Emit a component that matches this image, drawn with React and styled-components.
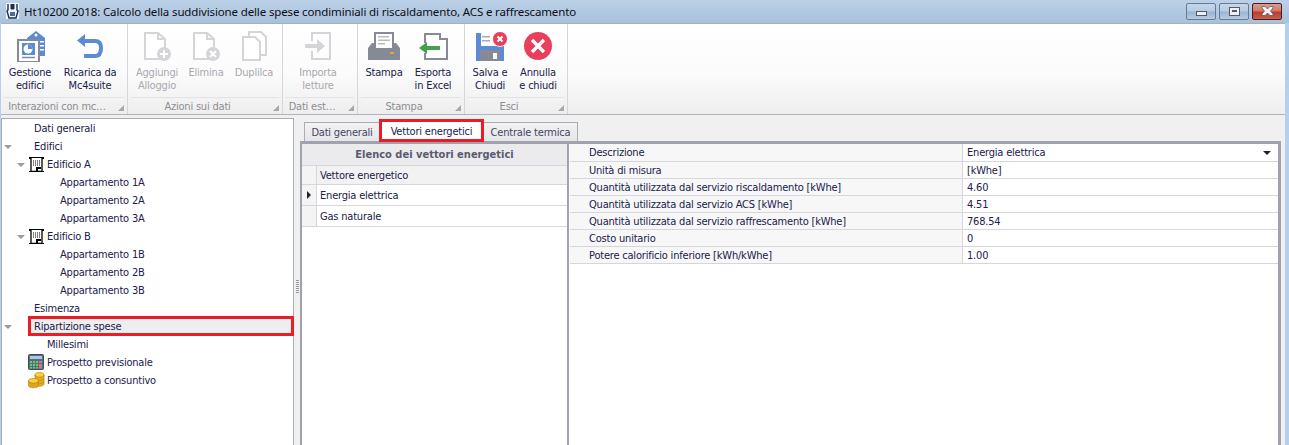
import React from 'react';
import styled, { createGlobalStyle } from 'styled-components';

const Global = createGlobalStyle`
  html, body { margin: 0; padding: 0; height: 445px; overflow: hidden; background: #b5d0ee; }
  * { box-sizing: border-box; }
`;

const UI_FONT = `"DejaVu Sans Condensed", "DejaVu Sans", sans-serif`;

const Window = styled.div`
  width: 1289px;
  height: 445px;
  display: flex;
  flex-direction: column;
  overflow: hidden;
  font-family: ${UI_FONT};
  font-size: 11px;
  letter-spacing: -0.2px;
  color: #20204a;
  background: #b5d0ee;
`;

const TitleBar = styled.div`
  height: 23px;
  flex: none;
  display: flex;
  align-items: center;
  padding: 0 7px 1px 6px;
  background: linear-gradient(to bottom, #bcd1e7, #a8c1dc);
`;

const TitleText = styled.div`
  flex: 1;
  margin-left: 5px;
  font-family: "Noto Sans", sans-serif;
  font-size: 11.5px;
  letter-spacing: -0.14px;
  color: #0c0c14;
  white-space: nowrap;
`;

const WinButton = styled.div`
  width: 30px;
  height: 17px;
  margin-left: 3px;
  display: flex;
  align-items: center;
  justify-content: center;
  border: 1px solid ${p => (p.$close ? '#4a1a28' : '#6a7a90')};
  border-radius: 2px;
  background: ${p =>
    p.$close
      ? 'linear-gradient(to bottom, #dc9a8a 0%, #d07a66 48%, #b83e28 52%, #c8604a 100%)'
      : 'linear-gradient(to bottom, #c5d7ea 0%, #b5cbe2 48%, #9ab4d0 52%, #b5cce4 100%)'};
`;

const Body = styled.div`
  flex: 1;
  min-height: 0;
  margin: 0 4px 0 1px;
  display: flex;
  flex-direction: column;
  background: #f0f0f0;
`;

const Ribbon = styled.div`
  height: 92px;
  flex: none;
  display: flex;
  border-top: 1px solid #a9b0ba;
  border-bottom: 1px solid #b0b4bc;
  background: linear-gradient(to bottom, #ffffff 0%, #fbfbfc 55%, #eeeeef 100%);
`;

const Group = styled.div`
  position: relative;
  width: ${p => p.$width}px;
  flex: none;
  display: flex;
  flex-direction: column;
  border-right: 1px solid #d6d6da;
`;

const GroupButtons = styled.div`
  flex: 1;
  display: flex;
  padding-left: ${p => p.$pad}px;
`;

const GroupLabel = styled.div`
  height: 17px;
  margin: 0 3px;
  padding-right: ${p => p.$pr ?? 15}px;
  border-top: 1px solid #e4e4e6;
  text-align: center;
  line-height: 17px;
  color: #8d8d92;
  white-space: nowrap;
`;

const Launcher = styled.div`
  position: absolute;
  right: 3px;
  bottom: 3px;
  width: 0;
  height: 0;
  border-left: 6px solid transparent;
  border-bottom: 6px solid #a8a8ac;
`;

const ToolButton = styled.div`
  width: ${p => p.$width}px;
  flex: none;
  display: flex;
  flex-direction: column;
  align-items: center;
  padding-top: 4px;
  color: ${p => (p.$disabled ? '#a9a9ae' : '#20204a')};
`;

const ToolIcon = styled.div`
  height: 36px;
  display: flex;
  align-items: center;
  justify-content: center;
`;

const ToolLabel = styled.div`
  margin-top: 2px;
  text-align: center;
  line-height: 13px;
  white-space: pre-line;
`;

const Content = styled.div`
  flex: 1;
  min-height: 0;
  display: flex;
  padding-top: 3px;
`;

const TreePanel = styled.div`
  width: 293px;
  flex: none;
  background: #fff;
  border: 1px solid #a9adb5;
  border-bottom: none;
`;

const TreeRow = styled.div`
  position: relative;
  height: 18px;
  display: flex;
  align-items: center;
  padding-left: ${p => 2 + p.$level * 13}px;
  margin-left: ${p => (p.$marked ? 27 : 0)}px;
  ${p => p.$marked && `
    padding-left: 5px;
    background: #eceef0;
    outline: 3px solid #ed1c24;
    outline-offset: -2px;
  `}
`;

const Expander = styled.div`
  width: 13px;
  flex: none;
  display: flex;
`;

const ExpanderGlyph = styled.div`
  width: 0;
  height: 0;
  margin: 1px 0 0 0;
  border-left: 4px solid transparent;
  border-right: 4px solid transparent;
  border-top: 4px solid #9a9a9e;
`;

const MarkedExpander = styled(ExpanderGlyph)`
  position: absolute;
  left: -25px;
  top: 7px;
`;

const TreeIcon = styled.div`
  width: 17px;
  flex: none;
  display: flex;
  align-items: center;
`;

const Splitter = styled.div`
  width: 6px;
  flex: none;
  display: flex;
  align-items: center;
  justify-content: center;
  padding-top: 10px;
`;

const Grip = styled.div`
  width: 3px;
  height: 14px;
  background: repeating-linear-gradient(to bottom, #9a9a9e 0 1px, transparent 1px 2px);
`;

const Main = styled.div`
  flex: 1;
  min-width: 0;
  display: flex;
  flex-direction: column;
  margin-right: 4px;
`;

const TabStrip = styled.div`
  height: 23px;
  flex: none;
  display: flex;
  align-items: flex-end;
  padding-left: 4px;
`;

const Tab = styled.div`
  position: relative;
  width: ${p => p.$width}px;
  height: ${p => (p.$active ? 21 : 19)}px;
  display: flex;
  align-items: center;
  justify-content: center;
  background: ${p => (p.$active ? '#fff' : 'linear-gradient(to bottom, #f2f2f4, #e6e6ea)')};
  border: 1px solid #a9adb5;
  border-bottom: none;
  ${p => p.$active && `
    outline: 3px solid #ed1c24;
    outline-offset: -2px;
    z-index: 1;
  `}
  color: ${p => (p.$active ? '#20204a' : '#45455f')};
`;

const TabPage = styled.div`
  flex: 1;
  min-height: 0;
  display: flex;
  background: #fff;
  border: 2px solid #a0a2ae;
  border-top-width: 3px;
  border-right-width: 3px;
  border-bottom: none;
`;

const ListPane = styled.div`
  width: 267px;
  flex: none;
  border-right: 2px solid #a0a2ae;
`;

const ListHeader = styled.div`
  height: 22px;
  display: flex;
  align-items: center;
  justify-content: center;
  font-weight: bold;
  letter-spacing: 0;
  color: #5a5a6e;
  background: #ebebed;
  border-bottom: 1px solid #d6d6dc;
`;

const ListRow = styled.div`
  height: ${p => (p.$head ? 19 : 21)}px;
  display: flex;
  border-bottom: 1px solid #d6d6dc;
  background: ${p => (p.$head ? '#f2f2f3' : '#fff')};
`;

const RowIndicator = styled.div`
  width: 15px;
  flex: none;
  display: flex;
  align-items: center;
  justify-content: center;
  background: #f4f4f5;
  border-right: 1px solid #d6d6dc;
`;

const IndicatorArrow = styled.div`
  width: 0;
  height: 0;
  border-top: 4px solid transparent;
  border-bottom: 4px solid transparent;
  border-left: 4px solid #20202e;
`;

const RowText = styled.div`
  flex: 1;
  display: flex;
  align-items: center;
  padding-left: 3px;
`;

const PropPane = styled.div`
  flex: 1;
  min-width: 0;
  margin-left: 1px;
`;

const PropRow = styled.div`
  height: ${p => (p.$first ? 18 : 17)}px;
  display: flex;
  border-bottom: 1px solid #d6d6dc;
`;

const PropLabel = styled.div`
  width: 393px;
  flex: none;
  padding-left: 19px;
  line-height: 18px;
  background: #f7f7f8;
  border-right: 1px solid #d6d6dc;
  white-space: nowrap;
`;

const PropValue = styled.div`
  flex: 1;
  display: flex;
  justify-content: space-between;
  padding: 0 7px 0 4px;
  line-height: 18px;
`;

const DropArrow = styled.div`
  width: 0;
  height: 0;
  margin-top: 7px;
  border-left: 4px solid transparent;
  border-right: 4px solid transparent;
  border-top: 4px solid #20202e;
`;

const GestioneIcon = () => (
  <svg width="30" height="32" viewBox="0 0 30 32" style={{ marginLeft: 4 }}>
    <path d="M10 8 L19 1 L28 8 V26 H10 Z" fill="#5b8bd0" />
    <circle cx="19" cy="5" r="1.5" fill="#fff" />
    <path d="M23 11h4v1.5h-4zM23 15h4v1.5h-4zM23 19h4v1.5h-4z" fill="#fff" />
    <rect x="1" y="10" width="21" height="22" fill="#fff" stroke="#868a96" strokeWidth="2" />
    <path d="M5 13h13v12H5z" fill="#5b8bd0" />
    <circle cx="11" cy="19" r="4.5" fill="#fff" />
    <path d="M11 19 V14.5 A4.5 4.5 0 0 1 15.5 19 Z" fill="#5b8bd0" />
    <path d="M5 27.5h13" stroke="#868a96" strokeWidth="1.5" />
  </svg>
);

const RicaricaIcon = () => (
  <svg width="28" height="26" viewBox="0 0 28 26">
    <path d="M9 1 L1 7.5 L9 14 V10 H19 Q23 10 23 15 Q23 21 19 21 H8 V25 H19 Q27 25 27 15 Q27 6 19 6 H9 Z" fill="#5b8bd0" />
  </svg>
);

const PageShape = () => (
  <path d="M2 2 H15 L22 8 V28 H2 Z M15 2 V8 H22" fill="#fff" stroke="#d4d5d9" strokeWidth="2" />
);

const AggiungiIcon = () => (
  <svg width="28" height="30" viewBox="0 0 28 30">
    <PageShape />
    <circle cx="21" cy="23" r="7" fill="#d4d5d9" />
    <path d="M21 19v8M17 23h8" stroke="#fff" strokeWidth="2" />
  </svg>
);

const EliminaIcon = () => (
  <svg width="28" height="30" viewBox="0 0 28 30">
    <PageShape />
    <circle cx="21" cy="23" r="7" fill="#d4d5d9" />
    <path d="M18 20l6 6M24 20l-6 6" stroke="#fff" strokeWidth="2" />
  </svg>
);

const DuplicaIcon = () => (
  <svg width="26" height="30" viewBox="0 0 26 30">
    <path d="M8 1 H20 L25 6 V24 H8 Z" fill="#fff" stroke="#d4d5d9" strokeWidth="2" />
    <path d="M2 6 H14 L19 11 V29 H2 Z" fill="#fff" stroke="#d4d5d9" strokeWidth="2" />
  </svg>
);

const ImportaIcon = () => (
  <svg width="28" height="30" viewBox="0 0 28 30">
    <path d="M8 10 V2 H26 V28 H8 V20" fill="none" stroke="#d4d5d9" strokeWidth="2" />
    <path d="M1 13 H13 V8 L21 15 L13 22 V17 H1 Z" fill="#d4d5d9" />
  </svg>
);

const StampaIcon = () => (
  <svg width="32" height="28" viewBox="0 0 32 28">
    <path d="M6 0 H26 V12 H6 Z" fill="#868a96" />
    <path d="M4 11 H28 L32 16 V28 H0 V16 Z" fill="#868a96" />
    <path d="M8 2h16v14H8z" fill="#fff" />
    <path d="M10 4h11v1.5H10zM10 7.5h12V9H10zM10 11h7v1.5h-7z" fill="#b8bac0" />
    <rect x="22" y="20" width="4" height="2" fill="#f0a030" />
  </svg>
);

const EsportaIcon = () => (
  <svg width="30" height="27" viewBox="0 0 30 27" style={{ marginLeft: 2 }}>
    <path d="M6 10 V1 H21 V6 H28 V26 H6 V20" fill="#fff" stroke="#868a96" strokeWidth="2" />
    <path d="M0 15 L8 9 V13 H21 V17 H8 V21 Z" fill="#3fa34d" />
  </svg>
);

const SalvaIcon = () => (
  <svg width="32" height="29" viewBox="0 0 32 29" style={{ marginLeft: 3 }}>
    <path d="M0 1 H24 L28 5 V29 H0 Z" fill="#5b8bd0" />
    <path d="M5 1 H22 V14 H5 Z" fill="#fff" />
    <path d="M6 4h8v1.5H6zM6 8h8v1.5H6z" fill="#a9abb0" />
    <path d="M4 18 H24 V29 H4 Z" fill="#868a96" />
    <rect x="17" y="21" width="4" height="6" fill="#fff" />
    <circle cx="24" cy="7" r="7.5" fill="#e8405a" stroke="#fff" strokeWidth="0.8" />
    <path d="M21.5 4.5l5 5M26.5 4.5l-5 5" stroke="#fff" strokeWidth="2" />
  </svg>
);

const AnnullaIcon = () => (
  <svg width="28" height="28" viewBox="0 0 28 28">
    <circle cx="14" cy="14" r="14" fill="#e8405a" />
    <path d="M8 8l12 12M20 8L8 20" stroke="#fff" strokeWidth="3.4" />
  </svg>
);

const BuildingIcon = () => (
  <svg width="15" height="15" viewBox="0 0 15 15" style={{ marginLeft: -1 }}>
    <rect x="0" y="0" width="15" height="2" fill="#000" />
    <path d="M2 1v13.5h11V1" fill="#fff" stroke="#000" strokeWidth="1.3" />
    <rect x="0" y="14" width="15" height="1" fill="#000" />
    <path d="M4 4h1M6 4h1M8 4h1M10 4h1M4 6h1M6 6h1M8 6h1M10 6h1M4 8h1M6 8h1M8 8h1M10 8h1" stroke="#000" />
    <path d="M7 10h5v2H9v3H7z" fill="#000" />
  </svg>
);

const CalculatorIcon = () => (
  <svg width="16" height="16" viewBox="0 0 16 16" style={{ marginLeft: -2 }}>
    <rect x="0.5" y="0.5" width="15" height="15" rx="1" fill="#5a6a80" stroke="#3e4a5c" />
    <rect x="2" y="2" width="12" height="3" fill="#a9c8e8" />
    <path d="M2 7h2v2H2zM5 7h2v2H5zM8 7h2v2H8zM2 10h2v2H2zM5 10h2v2H5zM8 10h2v2H8zM2 13h2v1.5H2zM5 13h2v1.5H5zM8 13h2v1.5H8z" fill="#5fd068" />
    <path d="M11 7h3v2h-3zM11 10h3v4.5h-3z" fill="#c87a7a" />
  </svg>
);

const CoinsIcon = () => (
  <svg width="17" height="17" viewBox="0 0 17 17" style={{ marginLeft: -2 }}>
    <ellipse cx="11.5" cy="3" rx="4.5" ry="2.5" fill="#f8cf40" stroke="#b8860b" strokeWidth="0.7" />
    <path d="M7 3v9c0 3 9 3 9 0V3c0 3-9 3-9 0z" fill="#e8ae20" stroke="#b8860b" strokeWidth="0.7" />
    <path d="M7 6.5c0 2.5 9 2.5 9 0M7 9.5c0 2.5 9 2.5 9 0" fill="none" stroke="#b8860b" strokeWidth="0.7" />
    <ellipse cx="5.5" cy="9" rx="5" ry="2.5" fill="#f8cf40" stroke="#b8860b" strokeWidth="0.7" />
    <path d="M0.5 9v4.5c0 3 10 3 10 0V9c0 3-10 3-10 0z" fill="#e2a41c" stroke="#b8860b" strokeWidth="0.7" />
  </svg>
);

const AppIcon = () => (
  <svg width="13" height="16" viewBox="0 0 13 16">
    <rect width="13" height="16" fill="#f4f6fa" />
    <path d="M2 1v6l-1 1 2 7h7l2-7-1-1V1" fill="none" stroke="#1c2c50" strokeWidth="1.4" />
    <path d="M5 1v5h3V1" fill="#1c2c50" stroke="#1c2c50" />
    <path d="M4 9h5v4H4z" fill="#4a6aa0" />
  </svg>
);

const MinGlyph = () => (
  <svg width="11" height="5" viewBox="0 0 11 5" style={{ marginTop: 5 }}>
    <rect x="0.5" y="0.5" width="10" height="4" fill="#f0f0f4" stroke="#50586a" />
  </svg>
);

const MaxGlyph = () => (
  <svg width="11" height="9" viewBox="0 0 11 9">
    <rect x="0.5" y="0.5" width="10" height="8" fill="#f0f0f4" stroke="#50586a" />
    <rect x="3" y="3" width="5" height="2" fill="#50586a" />
  </svg>
);

const CloseGlyph = () => (
  <svg width="13" height="10" viewBox="0 0 13 10">
    <path d="M1 0.5h3l2.5 2.5L9 0.5h3v1.5L9.5 5 12 8v1.5H9L6.5 7 4 9.5H1V8l2.5-3L1 2z" fill="#f2f2f4" stroke="#50505a" strokeWidth="0.7" />
  </svg>
);

const ribbonGroups = [
  {
    label: 'Interazioni con mc…', width: 127, pad: 0, pr: 14,
    buttons: [
      { label: 'Gestione\nedifici', width: 58, icon: <GestioneIcon /> },
      { label: 'Ricarica da\nMc4suite', width: 62, icon: <RicaricaIcon /> },
    ],
  },
  {
    label: 'Azioni sui dati', width: 155, pad: 6,
    buttons: [
      { label: 'Aggiungi\nAlloggio', width: 46, icon: <AggiungiIcon />, disabled: true },
      { label: 'Elimina', width: 52, icon: <EliminaIcon />, disabled: true },
      { label: 'Duplilca', width: 44, icon: <DuplicaIcon />, disabled: true },
    ],
  },
  {
    label: 'Dati est…', width: 75, pad: 10, pr: 16,
    buttons: [{ label: 'Importa\nletture', width: 50, icon: <ImportaIcon />, disabled: true }],
  },
  {
    label: 'Stampa', width: 107, pad: 2, pr: 14,
    buttons: [
      { label: 'Stampa', width: 48, icon: <StampaIcon /> },
      { label: 'Esporta\nin Excel', width: 50, icon: <EsportaIcon /> },
    ],
  },
  {
    label: 'Esci', width: 103, pad: 1, pr: 14,
    buttons: [
      { label: 'Salva e\nChiudi', width: 48, icon: <SalvaIcon /> },
      { label: 'Annulla\ne chiudi', width: 48, icon: <AnnullaIcon /> },
    ],
  },
];

const treeItems = [
  { text: 'Dati generali', level: 0 },
  { text: 'Edifici', level: 0, open: true },
  { text: 'Edificio A', level: 1, open: true, icon: <BuildingIcon /> },
  { text: 'Appartamento 1A', level: 2 },
  { text: 'Appartamento 2A', level: 2 },
  { text: 'Appartamento 3A', level: 2 },
  { text: 'Edificio B', level: 1, open: true, icon: <BuildingIcon /> },
  { text: 'Appartamento 1B', level: 2 },
  { text: 'Appartamento 2B', level: 2 },
  { text: 'Appartamento 3B', level: 2 },
  { text: 'Esimenza', level: 0 },
  { text: 'Ripartizione spese', level: 0, open: true, marked: true },
  { text: 'Millesimi', level: 1 },
  { text: 'Prospetto previsionale', level: 1, icon: <CalculatorIcon /> },
  { text: 'Prospetto a consuntivo', level: 1, icon: <CoinsIcon /> },
];

const properties = [
  ['Descrizione', 'Energia elettrica'],
  ['Unità di misura', '[kWhe]'],
  ['Quantità utilizzata dal servizio riscaldamento [kWhe]', '4.60'],
  ['Quantità utilizzata dal servizio ACS [kWhe]', '4.51'],
  ['Quantità utilizzata dal servizio raffrescamento [kWhe]', '768.54'],
  ['Costo unitario', '0'],
  ['Potere calorificio inferiore [kWh/kWhe]', '1.00'],
];

const App = () => (
  <Window>
    <Global />
    <TitleBar>
      <AppIcon />
      <TitleText>Ht10200 2018: Calcolo della suddivisione delle spese condiminiali di riscaldamento, ACS e raffrescamento</TitleText>
      <WinButton><MinGlyph /></WinButton>
      <WinButton><MaxGlyph /></WinButton>
      <WinButton $close><CloseGlyph /></WinButton>
    </TitleBar>
    <Body>
      <Ribbon>
        {ribbonGroups.map(group => (
          <Group key={group.label} $width={group.width}>
            <GroupButtons $pad={group.pad}>
              {group.buttons.map(button => (
                <ToolButton key={button.label} $width={button.width} $disabled={button.disabled}>
                  <ToolIcon>{button.icon}</ToolIcon>
                  <ToolLabel>{button.label}</ToolLabel>
                </ToolButton>
              ))}
            </GroupButtons>
            <GroupLabel $pr={group.pr}>{group.label}</GroupLabel>
            <Launcher />
          </Group>
        ))}
      </Ribbon>
      <Content>
        <TreePanel>
          {treeItems.map(item => (
            <TreeRow key={item.text} $level={item.level} $marked={item.marked}>
              {item.marked ? (
                <MarkedExpander />
              ) : (
                <>
                  <Expander>{item.open && <ExpanderGlyph />}</Expander>
                  <TreeIcon>{item.icon}</TreeIcon>
                </>
              )}
              {item.text}
            </TreeRow>
          ))}
        </TreePanel>
        <Splitter><Grip /></Splitter>
        <Main>
          <TabStrip>
            <Tab $width={76}>Dati generali</Tab>
            <Tab $width={103} $active>Vettori energetici</Tab>
            <Tab $width={95}>Centrale termica</Tab>
          </TabStrip>
          <TabPage>
            <ListPane>
              <ListHeader>Elenco dei vettori energetici</ListHeader>
              <ListRow $head>
                <RowIndicator />
                <RowText>Vettore energetico</RowText>
              </ListRow>
              <ListRow>
                <RowIndicator><IndicatorArrow /></RowIndicator>
                <RowText>Energia elettrica</RowText>
              </ListRow>
              <ListRow>
                <RowIndicator />
                <RowText>Gas naturale</RowText>
              </ListRow>
            </ListPane>
            <PropPane>
              {properties.map(([label, value], i) => (
                <PropRow key={label} $first={i === 0}>
                  <PropLabel>{label}</PropLabel>
                  <PropValue>
                    {value}
                    {i === 0 && <DropArrow />}
                  </PropValue>
                </PropRow>
              ))}
            </PropPane>
          </TabPage>
        </Main>
      </Content>
    </Body>
  </Window>
);

export default App;
